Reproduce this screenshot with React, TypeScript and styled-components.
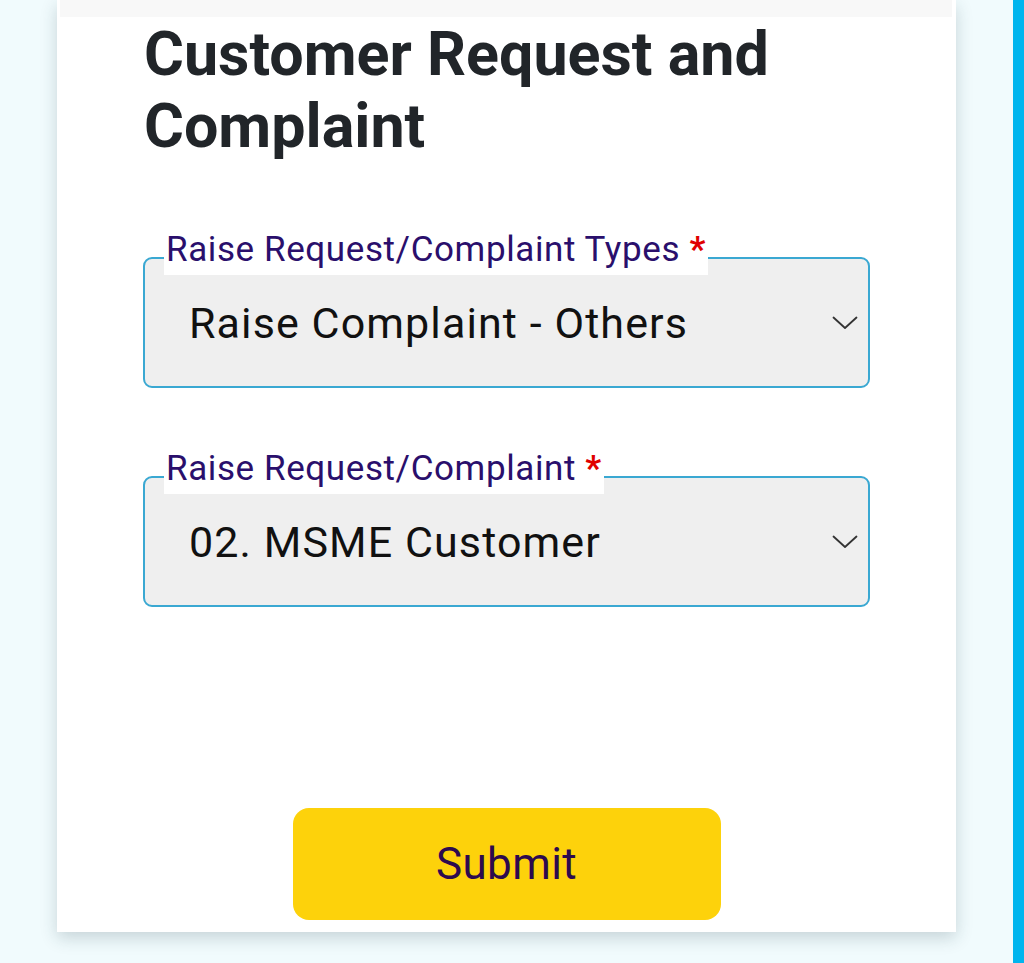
import React from "react";
import styled, { createGlobalStyle } from "styled-components";

const GlobalStyle = createGlobalStyle`
  html, body {
    margin: 0;
    padding: 0;
    background: #f1fbfd;
    font-family: Roboto, "Noto Sans", sans-serif;
  }
  * {
    box-sizing: border-box;
  }
`;

const fields = [
  { label: "Raise Request/Complaint Types", value: "Raise Complaint - Others" },
  { label: "Raise Request/Complaint", value: "02. MSME Customer" },
];

const ChevronDown = () => (
  <svg width="26" height="14" viewBox="0 0 26 14" fill="none">
    <path
      d="M1.5 1.5 L13 12 L24.5 1.5"
      stroke="#333"
      strokeWidth="1.8"
      strokeLinecap="round"
      strokeLinejoin="round"
    />
  </svg>
);

const App = () => {
  return (
    <>
      <GlobalStyle />
      <Page>
        <Card>
          <TopStrip />
          <CardBody>
            <Title>Customer Request and Complaint</Title>
            <Form>
              {fields.map((field, index) => (
                <Field key={index}>
                  <FieldLabel>
                    {field.label} <Required>*</Required>
                  </FieldLabel>
                  <SelectBox>
                    <SelectValue>{field.value}</SelectValue>
                    <ChevronDown />
                  </SelectBox>
                </Field>
              ))}
            </Form>
            <ButtonRow>
              <SubmitButton>Submit</SubmitButton>
            </ButtonRow>
          </CardBody>
        </Card>
        <SideBar />
      </Page>
    </>
  );
};

const Page = styled.div`
  display: flex;
  height: 963px;
  overflow: hidden;
`;

const Card = styled.div`
  margin-left: 57px;
  width: 899px;
  height: 932px;
  background: #fff;
  box-shadow: 0 6px 16px rgba(30, 60, 70, 0.2);
  display: flex;
  flex-direction: column;
`;

const TopStrip = styled.div`
  height: 17px;
  margin: 0 4px 0 3px;
  background: #f8f8f8;
`;

const CardBody = styled.div`
  flex: 1;
  padding: 0 86px 0 86px;
  display: flex;
  flex-direction: column;
`;

const Title = styled.h1`
  margin: 1px 0 0 1px;
  font-size: 61px;
  line-height: 72px;
  font-weight: 700;
  color: #212529;
`;

const Form = styled.div`
  margin-top: 70px;
  display: flex;
  flex-direction: column;
  gap: 63px;
`;

const Field = styled.div`
  position: relative;
  padding-top: 25px;
`;

const FieldLabel = styled.label`
  position: absolute;
  top: 0;
  left: 21px;
  height: 43px;
  padding: 0 2px 0 2px;
  background: #fff;
  font-size: 35px;
  line-height: 36px;
  letter-spacing: 0.6px;
  color: #2a0f6c;
`;

const Required = styled.span`
  color: #e00000;
  font-weight: 700;
`;

const SelectBox = styled.div`
  height: 131px;
  border: 2px solid #3aa8d2;
  border-radius: 9px;
  background: #efefef;
  display: flex;
  align-items: center;
  justify-content: space-between;
  padding: 0 10px 0 44px;
`;

const SelectValue = styled.span`
  font-size: 43px;
  letter-spacing: 1.1px;
  color: #111;
`;

const ButtonRow = styled.div`
  margin-top: 201px;
  display: flex;
  justify-content: center;
`;

const SubmitButton = styled.button`
  width: 428px;
  height: 112px;
  background: #fdd20b;
  border: none;
  border-radius: 16px;
  font-family: Roboto, "Noto Sans", sans-serif;
  font-size: 44px;
  letter-spacing: 0.4px;
  color: #2d0a4e;
  cursor: pointer;
`;

const SideBar = styled.div`
  margin-left: auto;
  width: 11px;
  background: #00b5ee;
`;

export default App;
